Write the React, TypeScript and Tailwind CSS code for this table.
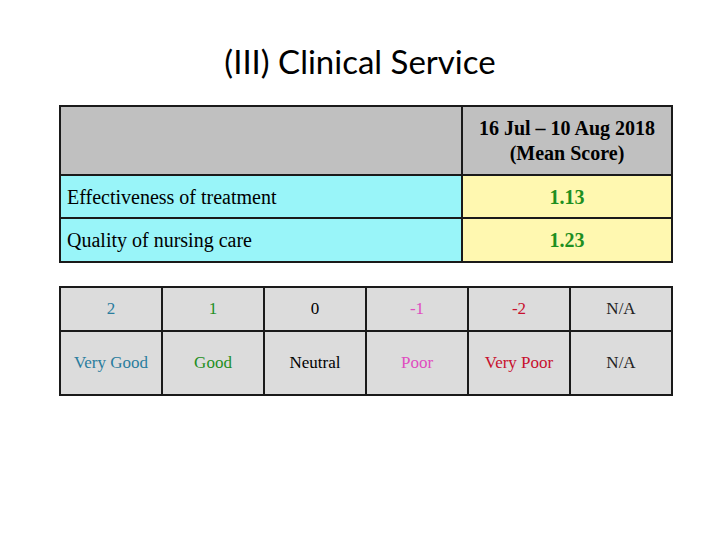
export default function App() {
  const scale = [
    { n: "2", label: "Very Good", color: "text-[#2a7d9e]" },
    { n: "1", label: "Good", color: "text-[#1f8f1f]" },
    { n: "0", label: "Neutral", color: "text-black" },
    { n: "-1", label: "Poor", color: "text-[#e04cc0]" },
    { n: "-2", label: "Very Poor", color: "text-[#c8102e]" },
    { n: "N/A", label: "N/A", color: "text-[#222]" },
  ];

  return (
    <div className="w-[720px] h-[540px] bg-white overflow-hidden">
      <h1 className="pt-[41px] h-[105px] text-center text-[33px] leading-[40px] text-black font-['Lato',sans-serif]">
        (III) Clinical Service
      </h1>

      <table className="ml-[59px] w-[614px] border-collapse font-['Liberation_Serif',serif] text-[20px] text-black">
        <tbody>
          <tr className="h-[69px]">
            <td className="w-[402px] border-2 border-[#1a1a1a] bg-[#c0c0c0]" />
            <td className="border-2 border-[#1a1a1a] bg-[#c0c0c0] text-center font-bold leading-[25px]">
              16 Jul – 10 Aug 2018
              <br />
              (Mean Score)
            </td>
          </tr>
          <tr className="h-[43px]">
            <td className="border-2 border-[#1a1a1a] bg-[#99f5f9] pl-[6px]">Effectiveness of treatment</td>
            <td className="border-2 border-[#1a1a1a] bg-[#fff8b0] text-center font-bold text-[#1f8f1f]">1.13</td>
          </tr>
          <tr className="h-[44px]">
            <td className="border-2 border-[#1a1a1a] bg-[#99f5f9] pl-[6px]">Quality of nursing care</td>
            <td className="border-2 border-[#1a1a1a] bg-[#fff8b0] text-center font-bold text-[#1f8f1f]">1.23</td>
          </tr>
        </tbody>
      </table>

      <table className="ml-[59px] mt-[23px] w-[614px] table-fixed border-collapse font-['Liberation_Serif',serif] text-[17px]">
        <tbody>
          <tr className="h-[44px]">
            {scale.map((s) => (
              <td key={s.n} className={`border-2 border-[#1a1a1a] bg-[#dcdcdc] text-center ${s.color}`}>
                {s.n}
              </td>
            ))}
          </tr>
          <tr className="h-[64px]">
            {scale.map((s) => (
              <td key={s.label + s.n} className={`border-2 border-[#1a1a1a] bg-[#dcdcdc] text-center ${s.color}`}>
                {s.label}
              </td>
            ))}
          </tr>
        </tbody>
      </table>
    </div>
  );
}
